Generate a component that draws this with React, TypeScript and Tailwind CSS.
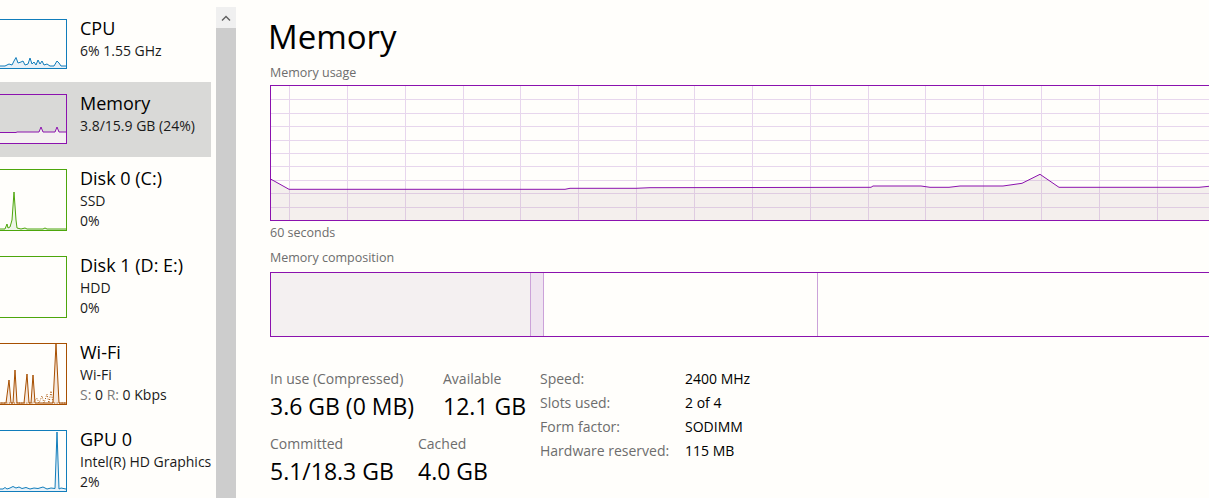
import React from 'react';

type Pt = [number, number];

interface Perf {
  id: string;
  title: string;
  lines: React.ReactNode[];
  border: string;
  height: string;
  vh: number;
  stroke: string;
  fill: string;
  pts: Pt[];
  dashed?: Pt[];
  selected?: boolean;
}

const toStr = (pts: Pt[]) => pts.map(([x, y]) => `${x},${y}`).join(' ');

const items: Perf[] = [
  {
    id: 'cpu',
    title: 'CPU',
    lines: ['6% 1.55 GHz'],
    border: 'border-[#117dbb]',
    height: 'h-[50px]',
    vh: 48,
    stroke: '#117dbb',
    fill: '#e8f1f8',
    pts: [[0, 46], [12, 46], [16, 44], [19, 45], [21, 41], [23, 37.5], [25, 43], [28, 42], [30, 41], [32, 45], [35, 44], [37, 38], [39, 44], [41, 42], [43, 45], [45, 40], [47, 44], [49, 41], [51, 45], [54, 44], [57, 46], [61, 46], [64, 41], [66, 43], [68, 46], [73, 46]],
  },
  {
    id: 'mem',
    title: 'Memory',
    lines: ['3.8/15.9 GB (24%)'],
    border: 'border-[#8b12ae]',
    height: 'h-[50px]',
    vh: 48,
    stroke: '#8b12ae',
    fill: '#f4f0f1',
    pts: [[0, 37.5], [23, 37.5], [24, 37], [46, 37], [48, 32], [50, 37], [62, 37], [64, 32], [66, 37], [73, 37]],
    selected: true,
  },
  {
    id: 'disk0',
    title: 'Disk 0 (C:)',
    lines: ['SSD', '0%'],
    border: 'border-[#4da60c]',
    height: 'h-[62px]',
    vh: 60,
    stroke: '#4da60c',
    fill: '#edf6e6',
    pts: [[0, 59], [12, 59], [14, 54], [15, 58], [17, 57], [19, 50], [21, 22], [23, 50], [24, 58], [28, 59], [32, 58], [34, 59], [50, 59], [52, 58], [54, 59], [73, 59]],
  },
  {
    id: 'disk1',
    title: 'Disk 1 (D: E:)',
    lines: ['HDD', '0%'],
    border: 'border-[#4da60c]',
    height: 'h-[62px]',
    vh: 60,
    stroke: '#4da60c',
    fill: '#edf6e6',
    pts: [],
  },
  {
    id: 'wifi',
    title: 'Wi-Fi',
    lines: [
      'Wi-Fi',
      <>
        <span className="text-[#7a7a7a]">S:</span> 0 <span className="text-[#7a7a7a]">R:</span> 0 Kbps
      </>,
    ],
    border: 'border-[#a74f01]',
    height: 'h-[62px]',
    vh: 60,
    stroke: '#a74f01',
    fill: '#f6e9de',
    pts: [[0, 59], [13, 59], [16, 36], [18, 59], [20, 59], [22, 26], [24, 59], [31, 59], [34, 30], [36, 59], [38, 59], [40, 31], [42, 59], [60, 59], [63, 0], [66, 59], [73, 59]],
    dashed: [[0, 56], [3, 52], [6, 59], [40, 59], [44, 54], [46, 59], [49, 52], [51, 59], [54, 50], [56, 59], [58, 47], [60, 59], [73, 59]],
  },
  {
    id: 'gpu',
    title: 'GPU 0',
    lines: ['Intel(R) HD Graphics', '2%'],
    border: 'border-[#117dbb]',
    height: 'h-[62px]',
    vh: 60,
    stroke: '#117dbb',
    fill: '#e8f1f8',
    pts: [[0, 58], [10, 58], [12, 56.5], [14, 58], [17, 57], [20, 55.5], [23, 57], [26, 56], [29, 57.5], [33, 56.5], [37, 58], [41, 57], [45, 57.5], [50, 56], [54, 58], [58, 57], [62, 57.5], [64, 1], [66, 58], [68, 57], [73, 58]],
  },
];

function Thumb({ item }: { item: Perf }) {
  return (
    <div className={`-ml-[8px] w-[75px] shrink-0 border ${item.border} ${item.height}`}>
      <svg className="block h-full w-full" viewBox={`0 0 73 ${item.vh}`} preserveAspectRatio="none">
        {item.pts.length > 0 && (
          <polygon points={`0,${item.vh} ${toStr(item.pts)} 73,${item.vh}`} fill={item.fill} />
        )}
        {item.dashed && (
          <polyline points={toStr(item.dashed)} fill="none" stroke={item.stroke} strokeWidth="1" strokeDasharray="1 1.5" />
        )}
        {item.pts.length > 0 && (
          <polyline points={toStr(item.pts)} fill="none" stroke={item.stroke} strokeWidth="1" />
        )}
      </svg>
    </div>
  );
}

function SideItem({ item }: { item: Perf }) {
  return (
    <div className={`flex w-[211px] pt-3 pb-[13px] ${item.selected ? 'bg-[#d9d9d7]' : ''}`}>
      <Thumb item={item} />
      <div className="ml-[13px] -mt-[3px] whitespace-nowrap">
        <div className="text-[18px] leading-[25px] text-black">{item.title}</div>
        {item.lines.map((l, i) => (
          <div key={i} className="text-[14px] leading-[20px] text-[#1a1a1a]">
            {l}
          </div>
        ))}
      </div>
    </div>
  );
}

// main usage chart, interior coords (959 x 134)
const usage: Pt[] = [
  [-1, 92.7], [18, 103.3], [294, 103.3], [299, 102.3], [365, 102.3], [379, 101.7], [600, 101.3], [602, 100], [650, 100],
  [659, 101.3], [678, 101.3], [689, 100], [732, 100], [751, 97.3], [769, 88.3], [788, 101.3], [928, 101.3], [938, 100.3], [960, 100.3],
];

function UsageChart() {
  const cols = Array.from({ length: 17 }, (_, i) => Math.round(18 + i * 57.85) + 0.5);
  const rows = Array.from({ length: 9 }, (_, i) => Math.round(13.4 * (i + 1)) + 0.5);
  return (
    <svg className="block" width="959" height="134" viewBox="0 0 959 134">
      {cols.map((x) => (
        <line key={'c' + x} x1={x} x2={x} y1={0} y2={134} stroke="#e7d6ed" strokeWidth="1" />
      ))}
      {rows.map((y) => (
        <line key={'r' + y} x1={0} x2={959} y1={y} y2={y} stroke="#e7d6ed" strokeWidth="1" />
      ))}
      <polygon points={`-1,134 ${toStr(usage)} 960,134`} fill="rgba(163,130,138,0.12)" />
      <polyline points={toStr(usage)} fill="none" stroke="#8b12ae" strokeWidth="1" />
    </svg>
  );
}

function Stat({ label, value }: { label: string; value: string }) {
  return (
    <div>
      <div className="text-[14px] leading-[20px] text-[#6d6d6d]">{label}</div>
      <div className="mt-[3px] text-[23px] leading-[28px] text-black">{value}</div>
    </div>
  );
}

const specs: [string, string][] = [
  ['Speed:', '2400 MHz'],
  ['Slots used:', '2 of 4'],
  ['Form factor:', 'SODIMM'],
  ['Hardware reserved:', '115 MB'],
];

export default function App() {
  return (
    <div className="flex h-[498px] w-[1209px] overflow-hidden bg-[#fffefb] font-['Open_Sans',sans-serif]">
      {/* Left list */}
      <div className="w-[216px] shrink-0 overflow-hidden pt-[7px]">
        {items.map((it) => (
          <SideItem key={it.id} item={it} />
        ))}
      </div>

      {/* Scrollbar */}
      <div className="mt-[7px] flex w-[20px] shrink-0 flex-col">
        <div className="flex h-[21px] items-center justify-center bg-[#f0f0f0]">
          <svg width="10" height="6" viewBox="0 0 10 6">
            <polyline points="1,5.5 5,1.5 9,5.5" fill="none" stroke="#606060" strokeWidth="1.4" />
          </svg>
        </div>
        <div className="flex-1 bg-[#cdcdcd]" />
      </div>

      {/* Main */}
      <div className="ml-[34px] flex shrink-0 flex-col">
        <h1 className="-ml-[2px] mt-[20px] text-[33px] leading-[33px] text-black">Memory</h1>
        <div className="mt-[12px] text-[12.5px] leading-[16px] text-[#6d6d6d]">Memory usage</div>
        <div className="mt-[4px] h-[136px] w-[960px] border-y border-l border-[#8b12ae]">
          <UsageChart />
        </div>
        <div className="mt-[4px] text-[12.5px] leading-[16px] text-[#6d6d6d]">60 seconds</div>
        <div className="mt-[9px] text-[12.5px] leading-[16px] text-[#6d6d6d]">Memory composition</div>
        <div className="mt-[6px] flex h-[65px] w-[960px] border-y border-l border-[#8b12ae]">
          <div className="w-[260px] border-r border-[#cba2d9] bg-[#f4f0f1]" />
          <div className="w-[13px] border-r border-[#cba2d9] bg-[#efe4f0]" />
          <div className="w-[274px] border-r border-[#cba2d9]" />
        </div>

        <div className="mt-[30px] flex items-start">
          <div className="w-[270px] pt-[2px]">
            <div className="flex">
              <div className="w-[173px]">
                <Stat label="In use (Compressed)" value="3.6 GB (0 MB)" />
              </div>
              <Stat label="Available" value="12.1 GB" />
            </div>
            <div className="mt-[14px] flex">
              <div className="w-[148px]">
                <Stat label="Committed" value="5.1/18.3 GB" />
              </div>
              <Stat label="Cached" value="4.0 GB" />
            </div>
          </div>
          <div className="grid grid-cols-[145px_auto] content-start text-[14px] leading-[24px]">
            {specs.map(([k, v]) => (
              <React.Fragment key={k}>
                <div className="text-[#6d6d6d]">{k}</div>
                <div className="text-black">{v}</div>
              </React.Fragment>
            ))}
          </div>
        </div>
      </div>
    </div>
  );
}
